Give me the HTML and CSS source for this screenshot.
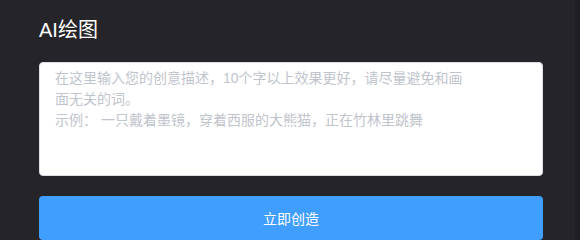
FILE: index.html
```html
<!DOCTYPE html>
<html lang="zh-CN">
<head>
<meta charset="utf-8">
<title>AI绘图</title>
<link rel="stylesheet" href="styles.css">
</head>
<body>
<div class="page">
  <main class="main">
    <h1 class="title">AI绘图</h1>
    <textarea class="prompt" placeholder="在这里输入您的创意描述，10个字以上效果更好，请尽量避免和画&#10;面无关的词。&#10;示例： 一只戴着墨镜，穿着西服的大熊猫，正在竹林里跳舞"></textarea>
    <button class="create" type="button">立即创造</button>
  </main>
  <div class="edge"></div>
</div>
</body>
</html>
```
FILE: styles.css
```css
html, body {
  margin: 0;
  padding: 0;
  height: 100%;
  background: #252429;
  overflow: hidden;
}
.page {
  display: flex;
  height: 100%;
}
.main {
  flex: 1;
  display: flex;
  flex-direction: column;
  padding: 16px 32px 0 39px;
  font-family: "Liberation Sans", "Noto Sans CJK SC", sans-serif;
}
.edge {
  width: 5px;
  background: #1f1e22;
}
.title {
  margin: 0 0 18px 0;
  font-size: 20px;
  line-height: 28px;
  font-weight: normal;
  color: #ffffff;
}
.prompt {
  display: block;
  box-sizing: border-box;
  width: 100%;
  height: 116px;
  margin: 0;
  padding: 5px 15px;
  border: 1px solid #dcdfe6;
  border-radius: 4px;
  background: #ffffff;
  font-family: "Liberation Sans", "Noto Sans CJK SC", sans-serif;
  font-size: 14px;
  line-height: 1.5;
  color: #606266;
  resize: none;
  outline: none;
}
.prompt::placeholder {
  color: #c0c4cc;
}
.create {
  display: block;
  box-sizing: border-box;
  width: 100%;
  height: 44px;
  margin-top: 20px;
  flex-shrink: 0;
  border: none;
  border-radius: 4px;
  background: #409eff;
  color: #ffffff;
  font-family: "Liberation Sans", "Noto Sans CJK SC", sans-serif;
  font-size: 14px;
  cursor: pointer;
}
```
